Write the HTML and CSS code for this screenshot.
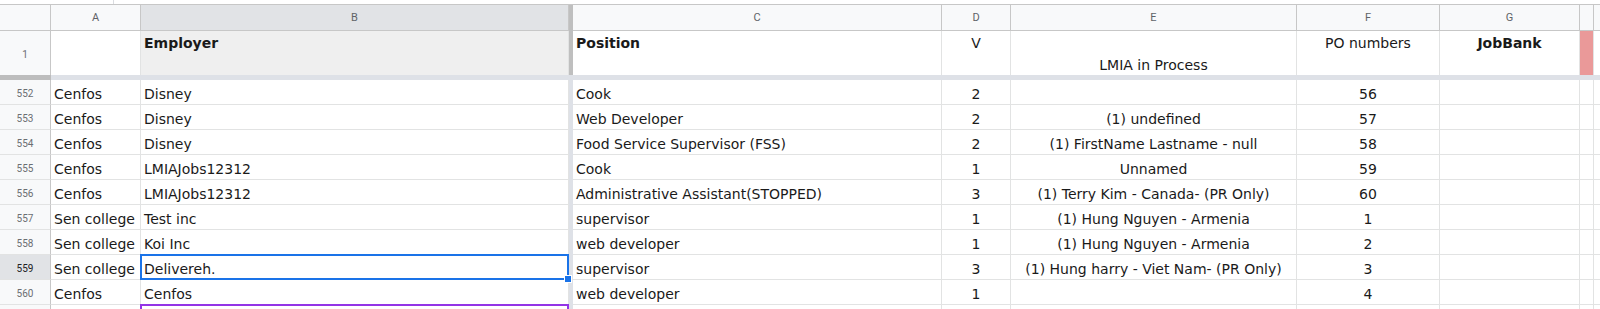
FILE: index.html
```html
<!DOCTYPE html>
<html lang="en">
<head>
    <meta charset="UTF-8">
    <title>LMIA sheet</title>
    <link rel="stylesheet" href="styles.css">
</head>
<body>
<div class="topstrip"><span class="tick"></span></div>

<div class="sheet">
    <!-- column letters -->
    <div class="row colhead">
        <div class="rh corner"></div>
        <div class="c ctr">A</div>
        <div class="c ctr picked">B</div>
        <div class="vsep dark"></div>
        <div class="c ctr">C</div>
        <div class="c ctr">D</div>
        <div class="c ctr">E</div>
        <div class="c ctr">F</div>
        <div class="c ctr">G</div>
        <div class="c"></div>
        <div class="c last"></div>
    </div>

    <!-- header row -->
    <div class="row hrow">
        <div class="rh">1</div>
        <div class="c"></div>
        <div class="c bold grey">Employer</div>
        <div class="vsep dark"></div>
        <div class="c bold">Position</div>
        <div class="c ctr">V</div>
        <div class="c ctr bottom">LMIA in Process</div>
        <div class="c ctr">PO numbers</div>
        <div class="c ctr bold">JobBank</div>
        <div class="c red"></div>
        <div class="c last"></div>
    </div>

    <!-- frozen divider -->
    <div class="hsep">
        <div class="hsep-rh"></div>
        <div class="hsep-rest"></div>
    </div>

    <div class="row">
        <div class="rh">552</div>
        <div class="c">Cenfos</div>
        <div class="c">Disney</div>
        <div class="vsep"></div>
        <div class="c">Cook</div>
        <div class="c ctr">2</div>
        <div class="c ctr"></div>
        <div class="c ctr">56</div>
        <div class="c"></div>
        <div class="c"></div>
        <div class="c last"></div>
    </div>
    <div class="row">
        <div class="rh">553</div>
        <div class="c">Cenfos</div>
        <div class="c">Disney</div>
        <div class="vsep"></div>
        <div class="c">Web Developer</div>
        <div class="c ctr">2</div>
        <div class="c ctr">(1) undefined</div>
        <div class="c ctr">57</div>
        <div class="c"></div>
        <div class="c"></div>
        <div class="c last"></div>
    </div>
    <div class="row">
        <div class="rh">554</div>
        <div class="c">Cenfos</div>
        <div class="c">Disney</div>
        <div class="vsep"></div>
        <div class="c">Food Service Supervisor (FSS)</div>
        <div class="c ctr">2</div>
        <div class="c ctr">(1) FirstName Lastname - null</div>
        <div class="c ctr">58</div>
        <div class="c"></div>
        <div class="c"></div>
        <div class="c last"></div>
    </div>
    <div class="row">
        <div class="rh">555</div>
        <div class="c">Cenfos</div>
        <div class="c">LMIAJobs12312</div>
        <div class="vsep"></div>
        <div class="c">Cook</div>
        <div class="c ctr">1</div>
        <div class="c ctr">Unnamed</div>
        <div class="c ctr">59</div>
        <div class="c"></div>
        <div class="c"></div>
        <div class="c last"></div>
    </div>
    <div class="row">
        <div class="rh">556</div>
        <div class="c">Cenfos</div>
        <div class="c">LMIAJobs12312</div>
        <div class="vsep"></div>
        <div class="c">Administrative Assistant(STOPPED)</div>
        <div class="c ctr">3</div>
        <div class="c ctr">(1) Terry Kim - Canada- (PR Only)</div>
        <div class="c ctr">60</div>
        <div class="c"></div>
        <div class="c"></div>
        <div class="c last"></div>
    </div>
    <div class="row">
        <div class="rh">557</div>
        <div class="c">Sen college</div>
        <div class="c">Test inc</div>
        <div class="vsep"></div>
        <div class="c">supervisor</div>
        <div class="c ctr">1</div>
        <div class="c ctr">(1) Hung Nguyen - Armenia</div>
        <div class="c ctr">1</div>
        <div class="c"></div>
        <div class="c"></div>
        <div class="c last"></div>
    </div>
    <div class="row">
        <div class="rh">558</div>
        <div class="c">Sen college</div>
        <div class="c">Koi Inc</div>
        <div class="vsep"></div>
        <div class="c">web developer</div>
        <div class="c ctr">1</div>
        <div class="c ctr">(1) Hung Nguyen - Armenia</div>
        <div class="c ctr">2</div>
        <div class="c"></div>
        <div class="c"></div>
        <div class="c last"></div>
    </div>
    <div class="row">
        <div class="rh active">559</div>
        <div class="c">Sen college</div>
        <div class="c sel">Delivereh.<span class="handle"></span></div>
        <div class="vsep"></div>
        <div class="c">supervisor</div>
        <div class="c ctr">3</div>
        <div class="c ctr">(1) Hung harry - Viet Nam- (PR Only)</div>
        <div class="c ctr">3</div>
        <div class="c"></div>
        <div class="c"></div>
        <div class="c last"></div>
    </div>
    <div class="row">
        <div class="rh">560</div>
        <div class="c">Cenfos</div>
        <div class="c">Cenfos</div>
        <div class="vsep"></div>
        <div class="c">web developer</div>
        <div class="c ctr">1</div>
        <div class="c ctr"></div>
        <div class="c ctr">4</div>
        <div class="c"></div>
        <div class="c"></div>
        <div class="c last"></div>
    </div>
    <!-- 561行目は上端だけ見えている -->
    <div class="row">
        <div class="rh"></div>
        <div class="c"></div>
        <div class="c peer"></div>
        <div class="vsep"></div>
        <div class="c"></div>
        <div class="c"></div>
        <div class="c"></div>
        <div class="c"></div>
        <div class="c"></div>
        <div class="c"></div>
        <div class="c last"></div>
    </div>
</div>
</body>
</html>
```

FILE: styles.css
```css
body {
    margin: 0;
    height: 309px;
    overflow: hidden;
    background-color: #fff;
    font-family: "DejaVu Sans", Verdana, sans-serif;
    font-size: 14px;
    color: #1a1a1a;
}
.topstrip {
    height: 4px;
    display: flex;
}
.tick {
    width: 1px;
    height: 4px;
    margin-left: 113px;
    background-color: #dadce0;
}
.sheet {
    border-top: 1px solid #c7c7c7;
}
/* 行・列の幅は全部ここで決める */
.row,
.hsep {
    display: grid;
    grid-template-columns: 51px 90px 428px 4px 369px 69px 286px 143px 140px 14px 1fr;
    height: 25px;
}
.c,
.rh {
    box-sizing: border-box;
    border-right: 1px solid #e2e3e3;
    border-bottom: 1px solid #e2e3e3;
    display: flex;
    align-items: center;
    padding: 4px 3px 0;
    white-space: nowrap;
    overflow: hidden;
}
.c.last {
    border-right: none;
}
.ctr {
    justify-content: center;
}
.bold {
    font-weight: bold;
}
.rh {
    justify-content: center;
    padding-top: 2px;
    background-color: #f8f9fa;
    border-right-color: #c7c7c7;
    color: #6b6e72;
    font-family: Roboto, Arial, sans-serif;
    font-size: 10px;
}
.rh.active {
    background-color: #e1e3e6;
    color: #202124;
}
.vsep {
    background-color: #dee1e7;
}
.vsep.dark {
    background-color: #bfbfbf;
}
/* 列見出し */
.colhead {
    height: 26px;
}
.colhead .c,
.colhead .rh {
    padding-top: 0;
    background-color: #f8f9fa;
    border-color: #c7c7c7;
    color: #5f6368;
    font-family: Roboto, Arial, sans-serif;
    font-size: 11px;
}
.colhead .c.picked {
    background-color: #e1e3e6;
}
/* 1行目 */
.hrow {
    height: 44px;
}
.hrow .c {
    align-items: flex-start;
    padding-top: 4px;
    border-bottom: none;
}
.hrow .rh {
    border-bottom: none;
}
.hrow .c.bottom {
    align-items: flex-end;
    padding-top: 0;
    padding-bottom: 2px;
}
.hrow .c.grey {
    background-color: #efefef;
}
.hrow .c.red {
    background-color: #ea9999;
}
.hsep {
    height: 5px;
    grid-template-columns: 51px 1fr;
}
.hsep-rh {
    background-color: #bdbdbd;
}
.hsep-rest {
    background-color: #dee1e7;
}
/* 選択セル */
.sel {
    position: relative;
    overflow: visible;
}
.sel::after {
    content: "";
    position: absolute;
    left: -1px;
    top: -1px;
    right: -1px;
    bottom: -1px;
    border: 2px solid #1a73e8;
}
.handle {
    position: absolute;
    right: -4px;
    bottom: -4px;
    width: 6px;
    height: 6px;
    background-color: #1a73e8;
    border: 1px solid #fff;
    z-index: 2;
}
.peer {
    position: relative;
    overflow: visible;
}
.peer::after {
    content: "";
    position: absolute;
    left: -1px;
    top: -1px;
    right: -1px;
    height: 10px;
    border: 2px solid #9334e6;
}
```
